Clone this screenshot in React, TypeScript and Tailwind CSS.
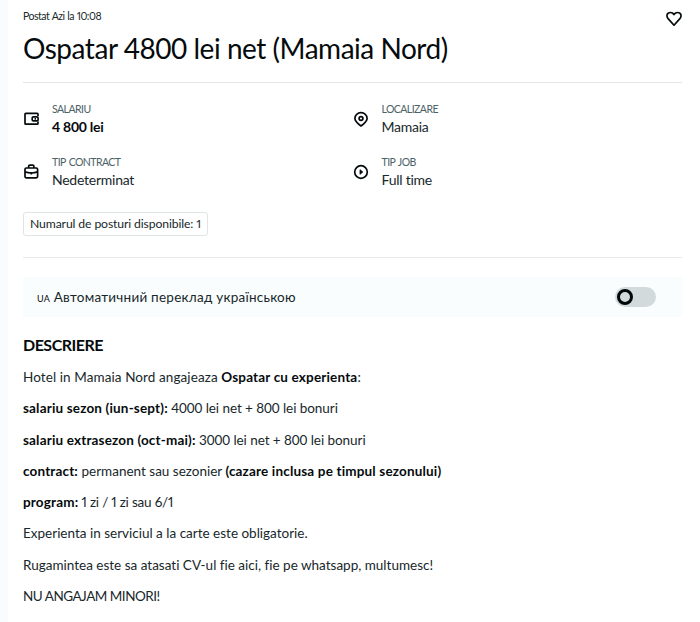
import type { ReactNode } from 'react';

type DetailProps = {
  icon: ReactNode;
  label: string;
  children: ReactNode;
};

const Icon = ({ children }: { children: ReactNode }) => (
  <svg className="h-4 w-4 shrink-0" viewBox="0 0 16 16" fill="none" stroke="#050b0d" strokeWidth="1.7" strokeLinejoin="round">
    {children}
  </svg>
);

const WalletIcon = () => (
  <Icon>
    <path d="M15 5V3.1Q15 2.3 14.2 2.3H2.8Q2 2.3 2 3.1V12.4Q2 13.2 2.8 13.2H14.2Q15 13.2 15 12.4V10.5" />
    <rect x="9.2" y="5.8" width="5.9" height="4" rx="1.1" />
    <path d="M11.6 7.8H13" />
  </Icon>
);

const BriefcaseIcon = () => (
  <Icon>
    <rect x="2" y="4" width="12.6" height="9.9" rx="1.3" />
    <path d="M5.7 4V2.3Q5.7 1.2 6.9 1.2H9.7Q10.9 1.2 10.9 2.3V4M2 7.8Q4.6 9 8.3 9T14.6 7.8M8.3 8V10.6" />
  </Icon>
);

const PinIcon = () => (
  <Icon>
    <path d="M8 15C5.2 12.8 1.9 10.5 1.9 7.4C1.9 4.1 4.6 1.6 8 1.6S14.1 4.1 14.1 7.4C14.1 10.5 10.8 12.8 8 15Z" />
    <circle cx="8" cy="7.5" r="1.9" />
  </Icon>
);

const PlayIcon = () => (
  <Icon>
    <circle cx="8" cy="8" r="6.3" />
    <path d="M7 5.7V10.3L9.8 8Z" fill="#050b0d" strokeWidth="0.8" />
  </Icon>
);

const Detail = ({ icon, label, children }: DetailProps) => (
  <div className="flex h-[53px] items-start">
    <div className="mt-[11px] mr-[13px]">{icon}</div>
    <div>
      <div className="text-[10.5px] leading-[18px] tracking-[-0.55px] text-[#4b6266] [word-spacing:1px]">{label}</div>
      <div className="text-[14px] leading-[18px] tracking-[-0.25px]">{children}</div>
    </div>
  </div>
);

export default function App() {
  return (
    <div className="h-[622px] w-[700px] overflow-hidden bg-[#fafbfd] pl-2 font-['Lato','Open_Sans',sans-serif] text-[#17272a] [font-variant-ligatures:none]">
      <main className="h-full bg-white pr-[18px] pl-[15px]">
        <header className="flex h-[83px] items-start justify-between border-b border-[#e3e5e6]">
          <div>
            <p className="pt-2 text-[10.5px] leading-4 tracking-[-0.5px] proportional-nums [word-spacing:0.6px]">Postat Azi la 10:08</p>
            <h1 className="mt-2 text-[28px] leading-8 tracking-[-0.47px] text-[#050b0d]">Ospatar 4800 lei net (Mamaia Nord)</h1>
          </div>
          <svg className="mt-[11px] h-4 w-4" viewBox="0 0 16 16" fill="none" stroke="#050b0d" strokeWidth="1.7" strokeLinejoin="round">
            <path d="M8 14.2L2.1 7.6C.2 5.3.6 1.5 4.4 1.5C6.2 1.5 7.3 2.4 8 3.5C8.7 2.4 9.8 1.5 11.6 1.5C15.4 1.5 15.8 5.3 13.9 7.6Z" />
          </svg>
        </header>

        <section className="h-[175px] border-b border-[#e8eaeb] pt-[17px]">
          <div className="grid grid-cols-[329.5px_1fr]">
            <Detail icon={<WalletIcon />} label="SALARIU">
              <b className="text-[#050b0d]">4 800 lei</b>
            </Detail>
            <Detail icon={<PinIcon />} label="LOCALIZARE">Mamaia</Detail>
            <Detail icon={<BriefcaseIcon />} label="TIP CONTRACT">Nedeterminat</Detail>
            <Detail icon={<PlayIcon />} label="TIP JOB">Full time</Detail>
          </div>
          <div className="mt-[6px] flex h-6 w-[185px] items-center justify-center rounded-[3px] border border-[#dfe4e5] text-[12.2px] tracking-[-0.12px] proportional-nums">
            Numarul de posturi disponibile: 1
          </div>
        </section>

        <div className="mt-[19px] flex h-[40px] items-center justify-between bg-[#fafdfe] pr-[26px] pl-[14px]">
          <span className="text-[13.5px] tracking-[0.25px]">
            <span className="text-[9px] text-[#050b0d]">UA</span> Автоматичний переклад українською
          </span>
          <button type="button" aria-label="Traducere" className="flex h-5 w-[41px] items-center rounded-full bg-[#d3dadb] pl-[2px]">
            <span className="h-4 w-4 rounded-full border-[3px] border-[#020708]" />
          </button>
        </div>

        <section className="text-[13.5px] leading-[18px] [&_b]:tracking-[0.17px] [&_b]:text-[#050b0d]">
          <h2 className="mt-[18px] text-[16px] leading-5 font-bold tracking-[-0.5px] text-[#050b0d]">DESCRIERE</h2>
          <div className="mt-[13px] flex flex-col gap-[13.3px] whitespace-nowrap">
            <p className="tracking-[0.09px]">Hotel in Mamaia Nord angajeaza <b>Ospatar cu experienta</b>:</p>
            <p className="tracking-[-0.06px]"><b>salariu sezon (iun-sept):</b> 4000 lei net + 800 lei bonuri</p>
            <p className="tracking-[-0.06px]"><b>salariu extrasezon (oct-mai):</b> 3000 lei net + 800 lei bonuri</p>
            <p><b>contract:</b> permanent sau sezonier <b>(cazare inclusa pe timpul sezonului)</b></p>
            <p className="tracking-[-0.2px] proportional-nums"><b>program:</b> 1 zi / 1 zi sau 6/1</p>
            <p>Experienta in serviciul a la carte este obligatorie.</p>
            <p>Rugamintea este sa atasati CV-ul fie aici, fie pe whatsapp, multumesc!</p>
            <p className="tracking-[-0.5px]">NU ANGAJAM MINORI!</p>
          </div>
        </section>
      </main>
    </div>
  );
}
